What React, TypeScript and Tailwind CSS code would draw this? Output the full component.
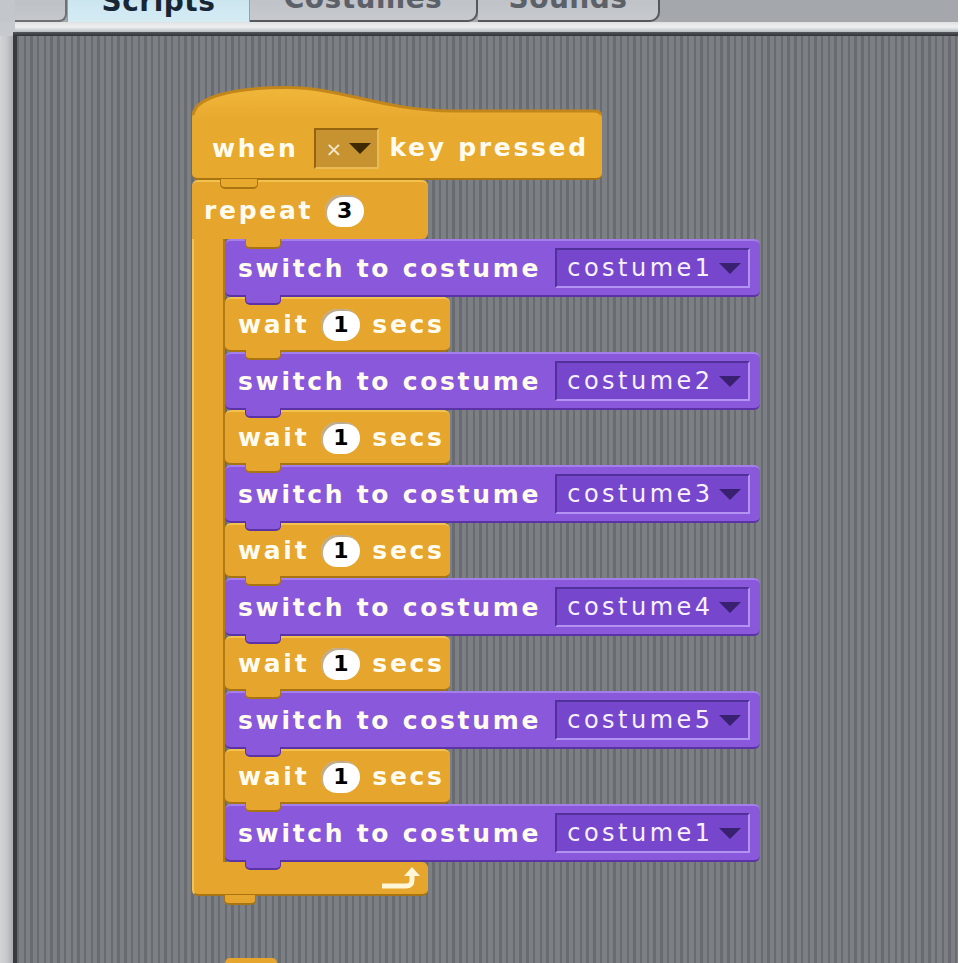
import React from "react";

const FONT = "font-['DejaVu_Sans','Liberation_Sans',sans-serif]";

function Label({ children }: { children: React.ReactNode }) {
  return (
    <span className="text-[25px] font-bold tracking-[2.7px] text-[#fffcef] leading-none whitespace-nowrap">
      {children}
    </span>
  );
}

function Pill({ v }: { v: string }) {
  return (
    <div className="w-[39px] h-[32px] rounded-full bg-white flex items-center justify-center text-[22px] font-bold text-black leading-none shadow-[inset_2px_2px_0_rgba(110,70,0,0.45)]">
      {v}
    </div>
  );
}

function Tri({ color }: { color: string }) {
  return (
    <svg width="24" height="13" viewBox="0 0 24 13" className="shrink-0">
      <path d="M1 1 L23 1 L12 12 Z" fill={color} />
    </svg>
  );
}

function SwitchBlock({ n }: { n: number }) {
  return (
    <div className="relative w-[535px] h-[58px] bg-[#8a58da] rounded-[6px] border-t-2 border-t-[#a47fec] border-b-2 border-b-[#5c33a6] flex items-center pl-[13px] gap-[14px]">
      <Label>switch to costume</Label>
      <div className="w-[195px] h-[40px] bg-[#7646cc] border-2 border-t-[#52309a] border-l-[#52309a] border-b-[#b293f2] border-r-[#b293f2] flex items-center pl-[10px] pr-[6px]">
        <span className="text-[24px] tracking-[3.5px] text-[#f6f0ff] leading-none whitespace-nowrap">
          costume{n}
        </span>
        <div className="ml-auto">
          <Tri color="#3a2070" />
        </div>
      </div>
      <div className="absolute left-[20px] bottom-[-10px] w-[36px] h-[10px] bg-[#8a58da] rounded-b-[5px] border-b-2 border-x border-[#5c33a6] z-10" />
    </div>
  );
}

function WaitBlock() {
  return (
    <div className="relative w-[225px] h-[55px] bg-[#e6a52c] rounded-[6px] border-t-2 border-t-[#f2c14e] border-b-2 border-b-[#a87412] flex items-center pl-[13px] gap-[12px]">
      <Label>wait</Label>
      <Pill v="1" />
      <Label>secs</Label>
      <div className="absolute left-[20px] bottom-[-10px] w-[36px] h-[10px] bg-[#e6a52c] rounded-b-[5px] border-b-2 border-x border-[#a87412] z-10" />
    </div>
  );
}

function HatBlock() {
  return (
    <div className="relative flex flex-col">
      <svg width="410" height="34" viewBox="0 0 410 34" className="block">
        <defs>
          <linearGradient id="hatg" x1="0" y1="0" x2="0" y2="1">
            <stop offset="0" stopColor="#f0b73a" />
            <stop offset="1" stopColor="#e8a92f" />
          </linearGradient>
        </defs>
        <path
          d="M0 34 C0 12 40 2 95 2 C150 2 190 26 262 26 L402 26 Q410 26 410 34 Z"
          fill="url(#hatg)"
        />
        <path
          d="M1 30 C3 12 42 2.5 95 2.5 C150 2.5 190 26 262 26 L402 26 Q408 26 409 30"
          fill="none"
          stroke="#c3861a"
          strokeWidth="3"
        />
      </svg>
      <div className="relative w-[410px] h-[61px] bg-[#e8a92f] rounded-b-[6px] border-b-2 border-b-[#a87412] flex items-center pl-[20px]">
        <Label>when</Label>
        <div className="ml-[16px] w-[65px] h-[41px] bg-[#c79230] border-2 border-t-[#94640e] border-l-[#94640e] border-b-[#e9bb55] border-r-[#e9bb55] flex items-center pl-[9px] pr-[4px] gap-[6px]">
          <span className="text-[20px] text-[#f6ead0] leading-none">×</span>
          <Tri color="#3d2a05" />
        </div>
        <div className="ml-[10px]">
          <Label>key pressed</Label>
        </div>
        <div className="absolute left-[28px] bottom-[-11px] w-[38px] h-[10px] bg-[#e8a92f] rounded-b-[5px] border-b-2 border-x border-[#a87412] z-20" />
      </div>
    </div>
  );
}

function RepeatBlock() {
  const items: React.ReactNode[] = [];
  for (let i = 0; i < 6; i++) {
    const n = i === 5 ? 1 : i + 1;
    items.push(<SwitchBlock key={"s" + i} n={n} />);
    if (i < 5) items.push(<WaitBlock key={"w" + i} />);
  }
  return (
    <div className="flex flex-col">
      <div className="relative w-[236px] h-[59px] bg-[#e6a52c] rounded-t-[6px] rounded-br-[6px] border-t-2 border-t-[#f2c14e] flex items-center pl-[12px] gap-[12px]">
        <Label>repeat</Label>
        <Pill v="3" />
        <div className="absolute left-[53px] bottom-[-10px] w-[36px] h-[10px] bg-[#e6a52c] rounded-b-[5px] border-b-2 border-x border-[#a87412] z-10" />
      </div>
      <div className="flex">
        <div className="w-[33px] bg-[#e6a52c] border-l-2 border-l-[#f4c454] border-r-2 border-r-[#b07a16]" />
        <div className="flex flex-col">{items}</div>
      </div>
      <div className="relative w-[236px] h-[34px] bg-[#e6a52c] rounded-b-[6px] rounded-tr-[6px] border-b-2 border-b-[#a87412] border-l-2 border-l-[#f4c454]">
        <svg width="44" height="26" viewBox="0 0 44 26" className="absolute left-[186px] top-[4px]">
          <path d="M2 20 L26 20 Q32 20 32 14 L32 9" fill="none" stroke="#fff7d8" strokeWidth="5" />
          <path d="M24 10 L32 1 L40 10 Z" fill="#fff7d8" />
        </svg>
        <div className="absolute left-[30px] bottom-[-11px] w-[32px] h-[10px] bg-[#e6a52c] rounded-b-[5px] border-b-2 border-x border-[#a87412] z-10" />
      </div>
    </div>
  );
}

export default function App() {
  return (
    <div className={`w-[980px] h-[963px] bg-white overflow-hidden ${FONT}`}>
      <div className="w-[958px] h-full flex flex-col bg-[#a6aaaf]">
        {/* tabs */}
        <div className="h-[22px] flex items-end overflow-hidden">
          <div className="w-[15px] h-full bg-[#c3c6cb]" />
          <div className="w-[52px] h-[40px] self-end bg-gradient-to-b from-[#b7babf] to-[#c4c7cc] border-r-2 border-b-2 border-[#6d7075] rounded-br-[8px]" />
          <div className="w-[183px] h-[40px] self-end bg-gradient-to-b from-[#c3e0ec] to-[#d5ecf4] border-x border-[#8aa4b0] flex items-end justify-center pb-[6px]">
            <span className="text-[28px] font-bold text-[#172635] leading-none tracking-[0.5px]">Scripts</span>
          </div>
          <div className="w-[228px] h-[40px] self-end bg-gradient-to-b from-[#b9bcc1] to-[#c6c9ce] border-r-2 border-b-2 border-[#55585d] rounded-br-[10px] flex items-end justify-center pb-[7px]">
            <span className="text-[28px] font-bold text-[#5c6068] leading-none tracking-[0.5px]">Costumes</span>
          </div>
          <div className="w-[182px] h-[40px] self-end bg-gradient-to-b from-[#b9bcc1] to-[#c6c9ce] border-r-2 border-b-2 border-[#55585d] rounded-br-[10px] flex items-end justify-center pb-[7px]">
            <span className="text-[28px] font-bold text-[#5c6068] leading-none tracking-[0.5px]">Sounds</span>
          </div>
          <div className="flex-1 h-full bg-[#a4a8ad]" />
        </div>
        <div className="h-[10px] flex">
          <div className="w-[15px] bg-[#c6c9cd]" />
          <div className="flex-1 bg-gradient-to-b from-[#dfe1e3] via-[#eef0f1] to-[#b9bcc0]" />
        </div>
        <div className="h-[4px] flex">
          <div className="w-[13px] bg-[#c6c9cd]" />
          <div className="flex-1 bg-gradient-to-b from-[#55585d] to-[#2f3237]" />
        </div>
        {/* canvas */}
        <div className="flex-1 flex min-h-0">
          <div className="w-[13px] bg-gradient-to-r from-[#d2d4d8] via-[#c6c8cc] to-[#a9acb1]" />
          <div className="w-[4px] bg-[#36393e]" />
          <div className="flex-1 overflow-hidden bg-[#7b7f84] bg-[image:repeating-linear-gradient(90deg,#686c71_0px,#686c71_2.4px,#7c8085_2.4px,#7c8085_6.7px)] pl-[175px] pt-[49px] flex flex-col items-start">
            <HatBlock />
            <RepeatBlock />
            <div className="ml-[33px] mt-[62px] w-[52px] h-[24px] rounded-t-full bg-[#e6a52c]" />
          </div>
        </div>
      </div>
    </div>
  );
}
